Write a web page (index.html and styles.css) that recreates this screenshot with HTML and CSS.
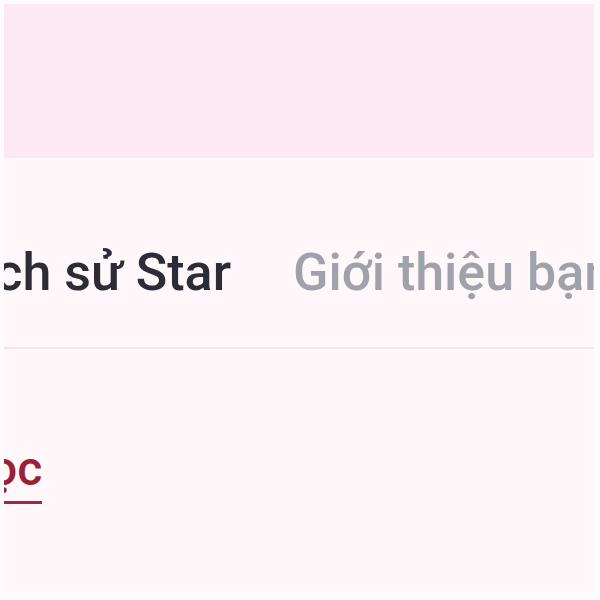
FILE: index.html
```html
<!DOCTYPE html>
<html>
<head>
    <title>Lịch sử Star</title>
    <link rel="stylesheet" href="styles.css">
</head>
<body>
    <div class="page">
        <div class="banner"></div>
        <div class="content">
            <div class="tabs">
                <span class="tab active">Lịch sử Star</span>
                <span class="tab">Giới thiệu bạn bè</span>
            </div>
            <div class="links">
                <a class="link" href="#">Đọc</a>
            </div>
        </div>
    </div>
</body>
</html>
```

FILE: styles.css
```css
html, body {
    margin: 0;
    height: 100%;
}

body {
    background-color: #fefbfc;
    font-family: Roboto, "Liberation Sans", sans-serif;
    overflow: hidden;
}

.page {
    margin: 4px 6px 8px 4px;
    height: 588px;
    background-color: #fff7f9;
    overflow: hidden;
}

.banner {
    height: 154px;
    background-color: #fde9f1;
}

.content {
    overflow: hidden;
}

.tabs {
    display: flex;
    gap: 62px;
    white-space: nowrap;
    margin-left: -50px;
    padding-top: 84px;
    padding-bottom: 44px;
    border-bottom: 2px solid #efe8eb;
    margin-right: -10px;
    font-size: 52px;
    font-weight: 500;
}

.tab {
    color: #9ea2ab;
}

.tab.active {
    color: #2b2d36;
}

.links {
    padding-top: 92px;
    margin-left: -46px;
}

.link {
    display: inline-block;
    font-size: 48px;
    font-weight: 500;
    line-height: 56px;
    color: #9a1f38;
    text-decoration: none;
    padding-bottom: 4px;
    border-bottom: 3px solid #a0283f;
}
```
